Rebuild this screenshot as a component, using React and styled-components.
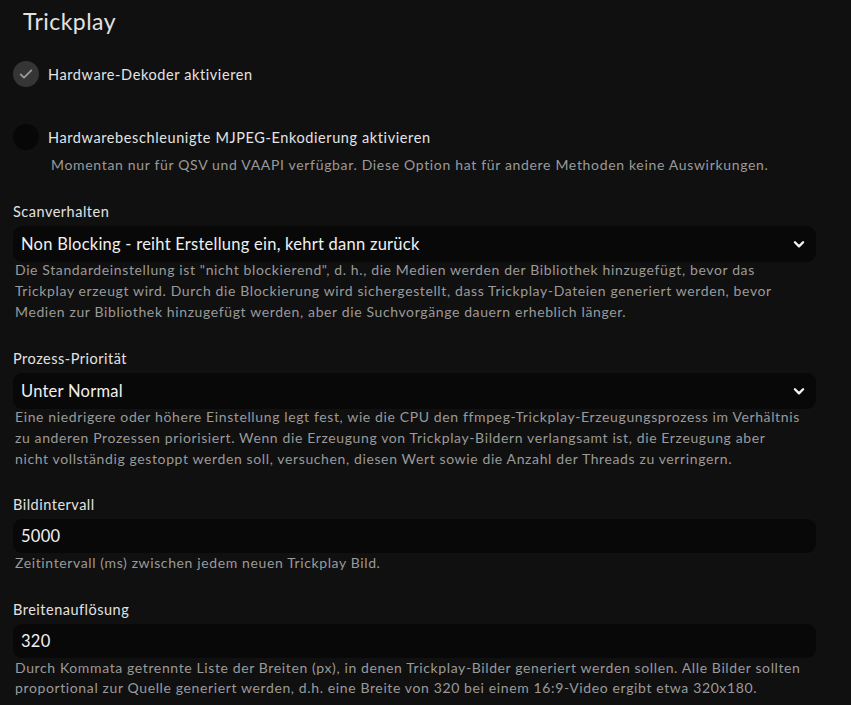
import React from 'react';
import styled, { createGlobalStyle } from 'styled-components';

const Global = createGlobalStyle`
  html, body {
    margin: 0;
    background: #101010;
  }
  body {
    font-family: Lato, "Noto Sans", sans-serif;
    color: rgba(255, 255, 255, 0.87);
  }
`;

const Page = styled.div`
  padding: 6px 35px 20px 13px;
  width: 851px;
  box-sizing: border-box;
`;

const Title = styled.h2`
  margin: 0 0 0 10px;
  font-size: 23px;
  font-weight: 400;
  line-height: 30px;
  letter-spacing: 0.45px;
  color: #e2e2e2;
`;

const CheckRow = styled.label`
  display: flex;
  align-items: center;
  gap: 9px;
  margin-top: ${p => p.$top}px;
  font-size: 14.5px;
  letter-spacing: 0.6px;
  color: #e4e4e4;
`;

const Circle = styled.span`
  width: 26px;
  height: 26px;
  border-radius: 50%;
  background: ${p => (p.$checked ? '#353535' : '#070707')};
  display: flex;
  align-items: center;
  justify-content: center;
  flex-shrink: 0;
`;

const CheckDesc = styled.div`
  margin: 5px 0 0 38px;
  font-size: 14px;
  line-height: 20px;
  letter-spacing: 0.67px;
  color: #9a9a9a;
`;

const Field = styled.div`
  margin-top: ${p => p.$top}px;
`;

const FieldLabel = styled.div`
  font-size: 14.5px;
  line-height: 20px;
  letter-spacing: 0.5px;
  color: #e2e2e2;
  margin-bottom: 4px;
`;

const SelectBox = styled.div`
  height: ${p => p.$h}px;
  background: #080808;
  border-radius: 9px;
  display: flex;
  align-items: center;
  justify-content: space-between;
  padding: 0 10px 0 8px;
  font-size: 16.5px;
  letter-spacing: 0.25px;
  color: #f0f0f0;
`;

const Description = styled.div`
  margin-top: ${p => p.$gap}px;
  font-size: 14px;
  line-height: 20.8px;
  letter-spacing: 0.62px;
  color: #9a9a9a;
  padding-left: 2px;
  span {
    display: block;
    white-space: nowrap;
  }
`;

const Check = () => (
  <svg width="16" height="16" viewBox="0 0 24 24" fill="none" stroke="#9c9c9c" strokeWidth="2.6" strokeLinecap="round" strokeLinejoin="round">
    <path d="M4 12.5l5 5L20 6.5" />
  </svg>
);

const Chevron = () => (
  <svg width="14" height="14" viewBox="0 0 24 24" fill="none" stroke="#f2f2f2" strokeWidth="4" strokeLinecap="round" strokeLinejoin="round">
    <path d="M5 9l7 7 7-7" />
  </svg>
);

const Lines = ({ lines, gap = -2 }) => (
  <Description $gap={gap}>
    {lines.map(l => <span key={l}>{l}</span>)}
  </Description>
);

export default function App() {
  return (
    <>
      <Global />
      <Page>
        <Title>Trickplay</Title>
        <CheckRow $top={25}>
          <Circle $checked><Check /></Circle>
          Hardware-Dekoder aktivieren
        </CheckRow>
        <CheckRow $top={37}>
          <Circle />
          Hardwarebeschleunigte MJPEG-Enkodierung aktivieren
        </CheckRow>
        <CheckDesc>Momentan nur für QSV und VAAPI verfügbar. Diese Option hat für andere Methoden keine Auswirkungen.</CheckDesc>

        <Field $top={27}>
          <FieldLabel>Scanverhalten</FieldLabel>
          <SelectBox $h={36}>
            Non Blocking - reiht Erstellung ein, kehrt dann zurück
            <Chevron />
          </SelectBox>
          <Lines lines={[
            'Die Standardeinstellung ist "nicht blockierend", d. h., die Medien werden der Bibliothek hinzugefügt, bevor das',
            'Trickplay erzeugt wird. Durch die Blockierung wird sichergestellt, dass Trickplay-Dateien generiert werden, bevor',
            'Medien zur Bibliothek hinzugefügt werden, aber die Suchvorgänge dauern erheblich länger.',
          ]} />
        </Field>

        <Field $top={27}>
          <FieldLabel>Prozess-Priorität</FieldLabel>
          <SelectBox $h={36}>
            Unter Normal
            <Chevron />
          </SelectBox>
          <Lines lines={[
            'Eine niedrigere oder höhere Einstellung legt fest, wie die CPU den ffmpeg-Trickplay-Erzeugungsprozess im Verhältnis',
            'zu anderen Prozessen priorisiert. Wenn die Erzeugung von Trickplay-Bildern verlangsamt ist, die Erzeugung aber',
            'nicht vollständig gestoppt werden soll, versuchen, diesen Wert sowie die Anzahl der Threads zu verringern.',
          ]} />
        </Field>

        <Field $top={25}>
          <FieldLabel>Bildintervall</FieldLabel>
          <SelectBox $h={34}>5000</SelectBox>
          <Lines gap={0} lines={['Zeitintervall (ms) zwischen jedem neuen Trickplay Bild.']} />
        </Field>

        <Field $top={26}>
          <FieldLabel>Breitenauflösung</FieldLabel>
          <SelectBox $h={34}>320</SelectBox>
          <Lines gap={0} lines={[
            'Durch Kommata getrennte Liste der Breiten (px), in denen Trickplay-Bilder generiert werden sollen. Alle Bilder sollten',
            'proportional zur Quelle generiert werden, d.h. eine Breite von 320 bei einem 16:9-Video ergibt etwa 320x180.',
          ]} />
        </Field>
      </Page>
    </>
  );
}
